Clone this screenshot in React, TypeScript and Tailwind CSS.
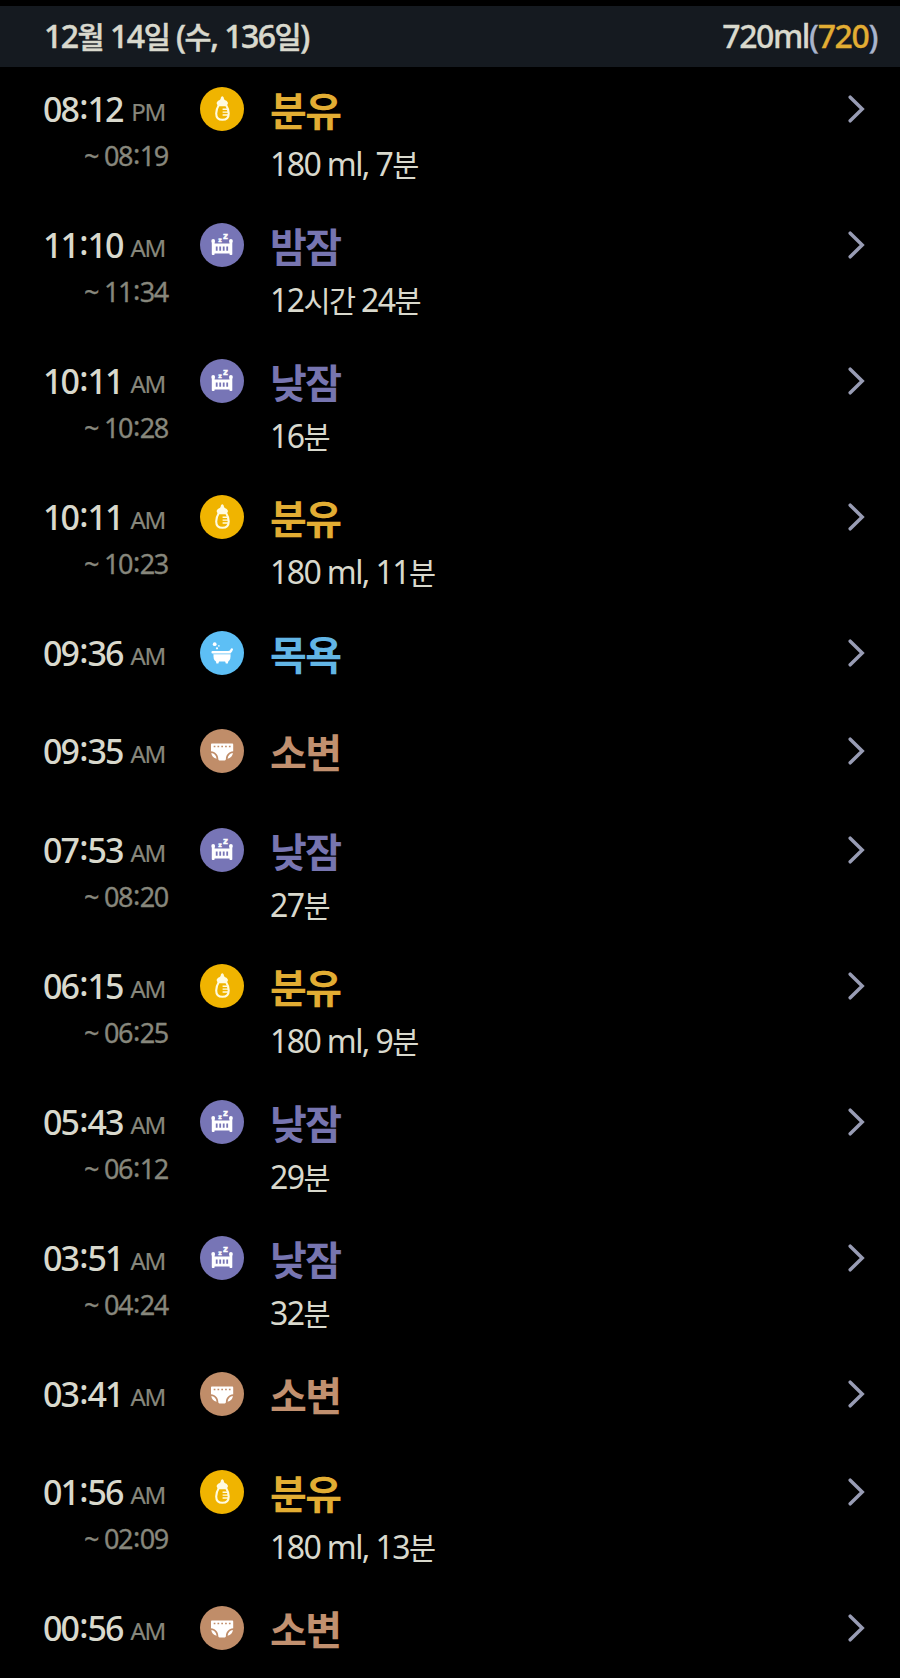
import React from 'react';

type Kind = 'formula' | 'sleep' | 'bath' | 'diaper';

interface Entry {
  time: string;
  meridiem: 'AM' | 'PM';
  end?: string;
  kind: Kind;
  title: string;
  detail?: string;
}

const entries: Entry[] = [
  { time: '08:12', meridiem: 'PM', end: '08:19', kind: 'formula', title: '분유', detail: '180 ml, 7분' },
  { time: '11:10', meridiem: 'AM', end: '11:34', kind: 'sleep', title: '밤잠', detail: '12시간 24분' },
  { time: '10:11', meridiem: 'AM', end: '10:28', kind: 'sleep', title: '낮잠', detail: '16분' },
  { time: '10:11', meridiem: 'AM', end: '10:23', kind: 'formula', title: '분유', detail: '180 ml, 11분' },
  { time: '09:36', meridiem: 'AM', kind: 'bath', title: '목욕' },
  { time: '09:35', meridiem: 'AM', kind: 'diaper', title: '소변' },
  { time: '07:53', meridiem: 'AM', end: '08:20', kind: 'sleep', title: '낮잠', detail: '27분' },
  { time: '06:15', meridiem: 'AM', end: '06:25', kind: 'formula', title: '분유', detail: '180 ml, 9분' },
  { time: '05:43', meridiem: 'AM', end: '06:12', kind: 'sleep', title: '낮잠', detail: '29분' },
  { time: '03:51', meridiem: 'AM', end: '04:24', kind: 'sleep', title: '낮잠', detail: '32분' },
  { time: '03:41', meridiem: 'AM', kind: 'diaper', title: '소변' },
  { time: '01:56', meridiem: 'AM', end: '02:09', kind: 'formula', title: '분유', detail: '180 ml, 13분' },
  { time: '00:56', meridiem: 'AM', kind: 'diaper', title: '소변' },
];

const titleColor: Record<Kind, string> = {
  formula: 'text-[#e2ad33]',
  sleep: 'text-[#7775b0]',
  bath: 'text-[#62b5e5]',
  diaper: 'text-[#c1906f]',
};

function BottleIcon() {
  return (
    <svg viewBox="0 0 44 44" className="h-11 w-11">
      <circle cx="22" cy="22" r="22" fill="#f0b400" />
      <path d="M22.3 9.2c.9 0 1.4 1 1.6 2.2.2 1 1 1.5 2.1 2.2 1.1.7 1.7 1.5 2 2.6l-1.2 2.5h-9l-1.2-2.5c.3-1.1.9-1.9 2-2.6 1.1-.7 1.9-1.2 2.1-2.2.2-1.2.7-2.2 1.6-2.2z" fill="#fffbe0" />
      <path d="M18.7 18.2c-1.5 2.300-2.500 5-2.500 8.300 0 4.300 1.700 6.300 6.200 6.300s6.300-2 6.300-6.300c0-3.300-1-6-2.500-8.300z" fill="none" stroke="#fffbe0" strokeWidth="2.1" />
      <path d="M22.6 22.2h5M22.6 25.1h5.5M22.6 28h5.5" stroke="#fffbe0" strokeWidth="1.4" />
    </svg>
  );
}

function CribIcon() {
  return (
    <svg viewBox="0 0 44 44" className="h-11 w-11">
      <circle cx="22" cy="22" r="22" fill="#7775b6" />
      <g fill="#fff">
        <circle cx="13.2" cy="17.9" r="1.9" />
        <circle cx="30.9" cy="17.9" r="1.9" />
        <rect x="11.8" y="18" width="2.8" height="14" rx=".8" />
        <rect x="29.5" y="18" width="2.8" height="14" rx=".8" />
        <path fillRule="evenodd" d="M13 20.6h18v10H13zM15.8 23.5v4.200h1.800v-4.200zM19.300 23.500v4.200h1.800v-4.200zM22.800 23.500v4.200h1.800v-4.200zM26.300 23.500v4.200h1.800v-4.200z" />
        <text x="18.3" y="19" stroke="#fff" strokeWidth=".4" className="font-['DejaVu_Sans'] text-[6px] font-bold">z</text>
        <text x="23" y="15.6" stroke="#fff" strokeWidth=".4" className="font-['DejaVu_Sans'] text-[8.5px] font-bold">z</text>
      </g>
    </svg>
  );
}

function BathIcon() {
  return (
    <svg viewBox="0 0 44 44" className="h-11 w-11">
      <circle cx="22" cy="22" r="22" fill="#5dbff5" />
      <g fill="#fff">
        <circle cx="14.7" cy="13.2" r="1.9" />
        <circle cx="17" cy="17.3" r="1.1" />
        <circle cx="18.9" cy="14.9" r=".8" />
        <path d="M12.6 20h15.600c1.400 0 2-.7 2.300-1.700.3-.8 1.100-1.200 1.900-.9.600.3.700.8.500 1.400-.8 2.500-2 3.600-4.200 3.600H12.600a1.200 1.200 0 0 1 0-2.400z" />
        <path d="M13.5 22.200h17v3.600c0 2.900-1.500 4.800-3.600 4.800h-9.800c-2.100 0-3.600-1.900-3.600-4.800z" />
        <path d="M15.7 29.5h3.600l-.9 3.100h-2zM24.900 29.500h3.600l-.7 3.100h-2z" />
      </g>
      <path d="M13.5 22.900h17" stroke="#5dbff5" strokeWidth=".7" />
    </svg>
  );
}

function DiaperIcon() {
  return (
    <svg viewBox="0 0 44 44" className="h-11 w-11">
      <circle cx="22" cy="22" r="22" fill="#c08d69" />
      <g fill="#fff">
        <path d="M11.8 14.600h20.600c.5 0 .8.300.8.800v6.900c-4.200.3-7.300 3.600-7.300 7.700 0 .9-.5 1.400-1.200 1.400h-5.200c-.7 0-1.200-.5-1.200-1.400 0-4.100-3.100-7.400-7.300-7.700v-6.900c0-.5.300-.8.800-.8z" />
        <path d="M11.300 24.100c2.900.3 5 2.600 5.300 5.700-3-.4-5.100-2.700-5.300-5.700zM32.900 24.100c-2.900.3-5 2.600-5.300 5.700 3-.4 5.100-2.700 5.300-5.700z" />
      </g>
      <path d="M13.7 17.500h17" stroke="#c08d69" strokeWidth="1.4" strokeDasharray="1.700 2.100" />
    </svg>
  );
}

const icons: Record<Kind, () => React.JSX.Element> = {
  formula: BottleIcon,
  sleep: CribIcon,
  bath: BathIcon,
  diaper: DiaperIcon,
};

function Clock({ value }: { value: string }) {
  const [hours, minutes] = value.split(':');
  return (
    <>
      {hours}
      <span className="inline-block -translate-y-[0.08em] px-[0.03em]">:</span>
      {minutes}
    </>
  );
}

// Hangul is set a little smaller than the digits around it
function Mixed({ text }: { text: string }) {
  return (
    <>
      {text.split(/([가-힣]+)/).map((part, index) =>
        index % 2 === 1 ? (
          <span key={index} className="text-[0.92em]">
            {part}
          </span>
        ) : (
          part
        )
      )}
    </>
  );
}

function Chevron() {
  return (
    <svg viewBox="0 0 18 28" className="mt-7 h-7 w-[18px]" fill="none" stroke="#989cb4" strokeWidth="3.5">
      <path d="M2.2 2.2L14.200 14l-12 11.800" strokeLinecap="round" />
    </svg>
  );
}

function Row({ entry }: { entry: Entry }) {
  const Icon = icons[entry.kind];
  return (
    <li className={entry.detail ? 'flex h-[136px] items-start' : 'flex h-[98.3px] items-start'}>
      <div className="w-[200px] pl-[43px] whitespace-nowrap">
        <div className="flex w-[122px] items-baseline justify-between pt-[18px] leading-[48px]">
          <span className="text-[34px] font-medium tracking-[-1.9px] text-[#d9d9cd]">
            <Clock value={entry.time} />
          </span>
          <span className="-translate-y-px text-[24px] tracking-[-1.3px] text-[#87877c] [-webkit-text-stroke:0.2px]">
            {entry.meridiem}
          </span>
        </div>
        {entry.end && (
          <div className="w-[125px] text-right text-[27px] leading-[38px] tracking-[-1.3px] text-[#87877c] [-webkit-text-stroke:0.3px]">
            ~ <Clock value={entry.end} />
          </div>
        )}
      </div>
      <div className="pt-5">
        <Icon />
      </div>
      <div className="flex-1 pl-[26px] whitespace-nowrap">
        <h2 className={`pt-4 text-[40px] leading-[56px] font-bold tracking-[-1.5px] ${titleColor[entry.kind]}`}>
          {entry.title}
        </h2>
        {entry.detail && (
          <p className="pt-[3px] text-[32px] leading-[44px] tracking-[-1.6px] text-[#d9d9cd]">
            <Mixed text={entry.detail} />
          </p>
        )}
      </div>
      <div className="pr-[34px]">
        <Chevron />
      </div>
    </li>
  );
}

export default function App() {
  return (
    <main className="h-[1678px] overflow-hidden bg-black pt-1.5 font-['Noto_Sans','Noto_Sans_CJK_KR',sans-serif]">
      <header className="flex h-[61px] items-center justify-between bg-[#151a20] pr-[23px] pb-0.5 pl-[44px] text-[32px] font-medium whitespace-nowrap text-[#d9d9cd]">
        <h1 className="tracking-[-1.5px] [-webkit-text-stroke:0.5px]">
          <Mixed text="12월 14일 (수, 136일)" />
        </h1>
        <div className="tracking-[-1.4px] [-webkit-text-stroke:0.3px]">
          720ml<span className="text-[#a9b4cc]">(</span>
          <span className="text-[#e2ad33]">720</span>
          <span className="text-[#a9b4cc]">)</span>
        </div>
      </header>
      <ul>
        {entries.map((entry, index) => (
          <Row key={index} entry={entry} />
        ))}
      </ul>
    </main>
  );
}
